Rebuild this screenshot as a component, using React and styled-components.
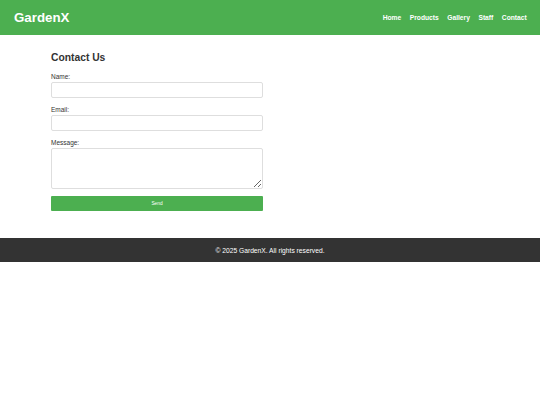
import styled, { createGlobalStyle } from "styled-components";

const GlobalStyle = createGlobalStyle`
  * { box-sizing: border-box; }
  body {
    margin: 0;
    font-family: "Liberation Sans", Arial, sans-serif;
    background: #fff;
    color: #333;
  }
`;

const navLinks = ["Home", "Products", "Gallery", "Staff", "Contact"];

const App = () => {
  return (
    <>
      <GlobalStyle />
      <Header>
        <Logo>GardenX</Logo>
        <Nav>
          {navLinks.map(link => (
            <NavLink key={link} href="#">{link}</NavLink>
          ))}
        </Nav>
      </Header>
      <Main>
        <Title>Contact Us</Title>
        <Form onSubmit={e => e.preventDefault()}>
          <Field>
            <Label htmlFor="name">Name:</Label>
            <Input id="name" type="text" />
          </Field>
          <Field>
            <Label htmlFor="email">Email:</Label>
            <Input id="email" type="email" />
          </Field>
          <Field last>
            <Label htmlFor="message">Message:</Label>
            <TextArea id="message" />
          </Field>
          <SendButton type="submit">Send</SendButton>
        </Form>
      </Main>
      <Footer>© 2025 GardenX. All rights reserved.</Footer>
    </>
  );
};

export default App;

const Header = styled.header`
  display: flex;
  align-items: center;
  justify-content: space-between;
  height: 35px;
  padding: 0 13.3px 0 14px;
  background: #4caf50;
  color: #fff;
`;

const Logo = styled.div`
  font-size: 13.3px;
  font-weight: bold;
  line-height: 1;
  padding-top: 1px;
`;

const Nav = styled.nav`
  display: flex;
  gap: 8.5px;
`;

const NavLink = styled.a`
  color: #fff;
  text-decoration: none;
  font-size: 6.7px;
  font-weight: bold;
  line-height: 8px;
`;

const Main = styled.main`
  padding: 16.5px 51px 27.25px;
`;

const Title = styled.h2`
  margin: 0 0 9.25px;
  font-size: 10.3px;
  line-height: 12px;
  font-weight: bold;
  color: #333;
`;

const Form = styled.form`
  width: 212px;
`;

const Field = styled.div`
  margin-bottom: ${props => (props.last ? "7px" : "8.25px")};
`;

const Label = styled.label`
  display: block;
  margin-bottom: 1.5px;
  font-size: 6.5px;
  line-height: 8px;
  color: #333;
`;

const Input = styled.input`
  display: block;
  width: 100%;
  height: 15.25px;
  margin: 0;
  padding: 2px 3px;
  border: 1px solid #dedede;
  border-radius: 2px;
  font-family: inherit;
  font-size: 6.5px;
  outline: none;
`;

const TextArea = styled.textarea`
  display: block;
  width: 100%;
  height: 41px;
  margin: 0;
  padding: 2px 3px;
  border: 1px solid #dedede;
  border-radius: 2px;
  font-family: inherit;
  font-size: 6.5px;
  outline: none;
`;

const SendButton = styled.button`
  display: block;
  width: 100%;
  height: 14.5px;
  margin: 0;
  padding: 0;
  border: none;
  border-radius: 1px;
  background: #4caf50;
  color: #fff;
  font-family: inherit;
  font-size: 4.8px;
  cursor: pointer;
`;

const Footer = styled.footer`
  display: flex;
  align-items: center;
  justify-content: center;
  height: 24px;
  background: #333;
  color: #fff;
  font-size: 6.7px;
`;
